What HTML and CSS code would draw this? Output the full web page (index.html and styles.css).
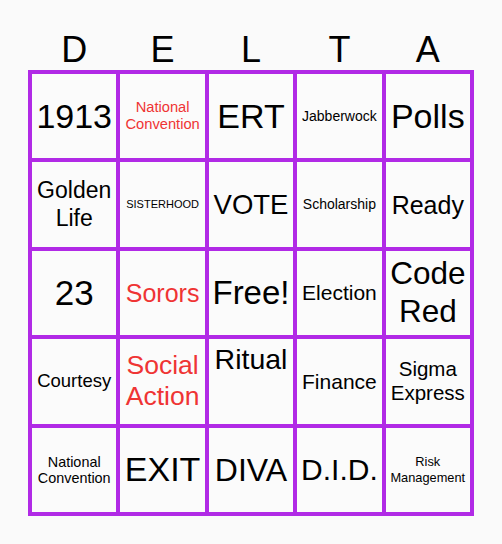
FILE: index.html
```html
<!DOCTYPE html>
<html lang="en">
<head>
<meta charset="utf-8">
<title>DELTA Bingo</title>
<link rel="stylesheet" href="styles.css">
</head>
<body>
<div class="card">
  <div class="header">
    <div>D</div><div>E</div><div>L</div><div>T</div><div>A</div>
  </div>
  <div class="grid">
    <div class="cell s34">1913</div>
    <div class="cell s147 red">National Convention</div>
    <div class="cell s34">ERT</div>
    <div class="cell s14">Jabberwock</div>
    <div class="cell s34">Polls</div>

    <div class="cell s23">Golden Life</div>
    <div class="cell s11">SISTERHOOD</div>
    <div class="cell s28">VOTE</div>
    <div class="cell s14">Scholarship</div>
    <div class="cell s25">Ready</div>

    <div class="cell s35">23</div>
    <div class="cell s25 red">Sorors</div>
    <div class="cell s33">Free!</div>
    <div class="cell s21">Election</div>
    <div class="cell s31">Code Red</div>

    <div class="cell s185">Courtesy</div>
    <div class="cell s265 red">Social Action</div>
    <div class="cell s285 top">Ritual</div>
    <div class="cell s21">Finance</div>
    <div class="cell s205">Sigma Express</div>

    <div class="cell s146">National Convention</div>
    <div class="cell s34">EXIT</div>
    <div class="cell s32">DIVA</div>
    <div class="cell s30">D.I.D.</div>
    <div class="cell s128">Risk Management</div>
  </div>
</div>
</body>
</html>
```
FILE: styles.css
```css
html, body {
  margin: 0;
  padding: 0;
}
body {
  background: #fafafa;
  font-family: "Liberation Sans", Arial, sans-serif;
  color: #000;
}
.card {
  width: 446px;
  margin-left: 28px;
  padding-top: 29px;
}
.header {
  display: grid;
  grid-template-columns: repeat(5, 1fr);
  column-gap: 4px;
  padding: 0 4px;
  font-size: 36px;
  line-height: 41px;
  text-align: center;
}
.grid {
  display: grid;
  grid-template-columns: repeat(5, 1fr);
  grid-template-rows: repeat(5, 1fr);
  gap: 4px;
  padding: 4px;
  height: 446px;
  box-sizing: border-box;
  background: #b12ae6;
}
.cell {
  background: #fbfbfb;
  display: flex;
  align-items: center;
  justify-content: center;
  text-align: center;
  line-height: 1.2;
  padding: 0 1px;
  overflow: hidden;
  min-width: 0;
}
.cell.top {
  align-items: flex-start;
  padding-top: 3px;
}
.red { color: #ef3434; }
.s11 { font-size: 11px; }
.s128 { font-size: 12.8px; }
.s14 { font-size: 14px; }
.s146 { font-size: 14.4px; line-height: 16px; }
.s147 { font-size: 14.7px; }
.s185 { font-size: 18.5px; }
.s205 { font-size: 20.5px; }
.s21 { font-size: 21px; }
.s23 { font-size: 23px; }
.s25 { font-size: 25px; }
.s265 { font-size: 26.5px; }
.s28 { font-size: 27.5px; }
.s285 { font-size: 28.5px; }
.s30 { font-size: 30px; }
.s31 { font-size: 31.5px; }
.s32 { font-size: 32px; }
.s33 { font-size: 33px; }
.s34 { font-size: 34px; }
.s35 { font-size: 35px; }
```
